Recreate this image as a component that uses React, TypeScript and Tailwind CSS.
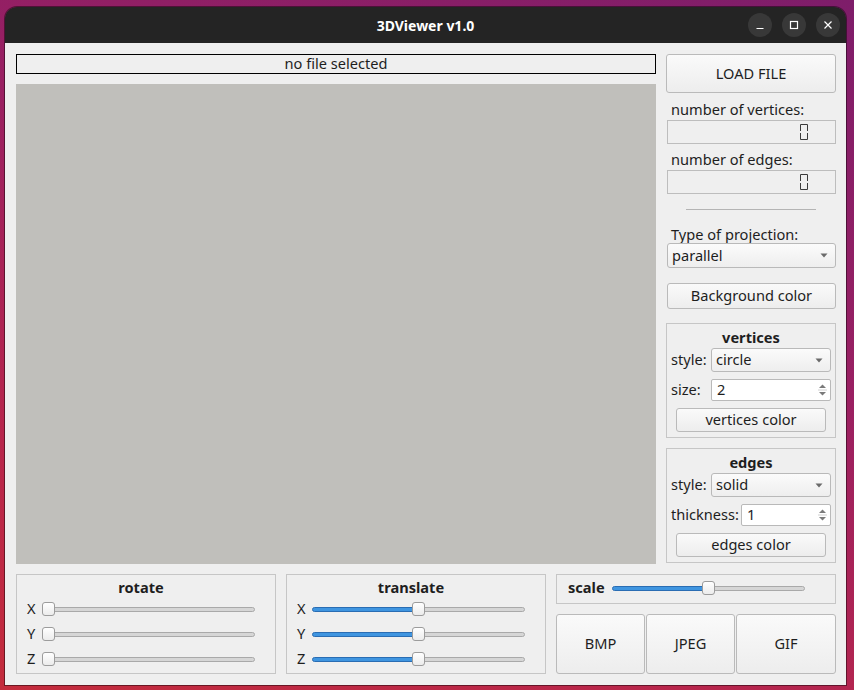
import React from "react";

const font = "font-['Noto_Sans',sans-serif]";

function Slider({ width, value, filled }: { width: number; value: number; filled: boolean }) {
  const handleLeft = Math.round((width - 13) * value);
  return (
    <div className="relative h-[14px]" style={{ width }}>
      <div className="absolute left-[2px] right-0 top-[5px] h-[5px] rounded-full border border-[#a9a9a9] bg-[#d6d6d6]" />
      {filled && (
        <div
          className="absolute left-0 top-[5px] h-[5px] rounded-l-full border border-[#2a6db3] bg-[#3f95e0]"
          style={{ width: handleLeft + 4 }}
        />
      )}
      <div
        className="absolute top-0 h-[14px] w-[13px] rounded-[3px] border border-[#9c9c9c] bg-gradient-to-b from-[#ffffff] to-[#ececec]"
        style={{ left: handleLeft }}
      />
    </div>
  );
}

function Combo({ text, className }: { text: string; className: string }) {
  return (
    <div
      className={`flex items-center justify-between rounded-[3px] border border-[#b9b9b9] bg-gradient-to-b from-[#fbfbfb] to-[#eeeeee] pl-[4px] pr-[7px] text-[14.6px] text-[#1e1e1e] ${className}`}
    >
      <span>{text}</span>
      <svg width="8" height="5" viewBox="0 0 8 5">
        <path d="M0.5 0.5 H7.5 L4 4.5 Z" fill="#6a6a6a" />
      </svg>
    </div>
  );
}

function Spin({ text, className }: { text: string; className: string }) {
  return (
    <div
      className={`flex items-center justify-between rounded-[2px] border border-[#b9b9b9] bg-white pl-[5px] pr-[3px] text-[14.6px] text-[#1e1e1e] ${className}`}
    >
      <span>{text}</span>
      <svg width="9" height="14" viewBox="0 0 9 14">
        <path d="M1 5 H8 L4.5 1.5 Z" fill="#7a7a7a" />
        <path d="M1 9 H8 L4.5 12.5 Z" fill="#7a7a7a" />
        <path d="M0 7 H9" stroke="#d0d0d0" strokeWidth="1" />
      </svg>
    </div>
  );
}

function Button({ children, className }: { children: React.ReactNode; className: string }) {
  return (
    <div
      className={`flex items-center justify-center rounded-[3px] border border-[#bababa] bg-gradient-to-b from-[#fafafa] to-[#ededed] text-[14.6px] text-[#1e1e1e] ${className}`}
    >
      {children}
    </div>
  );
}

function Lcd() {
  return (
    <div className="flex h-[24px] items-center justify-end border border-[#bdbdbd] bg-[#efefef] pr-[26px]">
      <svg width="10" height="18" viewBox="0 0 10 18">
        <path d="M1.5 8 V1.5 H8.5 V8" fill="none" stroke="#3a3a3a" strokeWidth="1" />
        <path d="M1.5 10 V16.5 H8.5 V10" fill="none" stroke="#3a3a3a" strokeWidth="1" />
      </svg>
    </div>
  );
}

function AxisRow({ label, value, filled }: { label: string; value: number; filled: boolean }) {
  return (
    <div className="flex h-[25px] items-center pl-[10px]">
      <span className="w-[15px] text-[14.6px] text-[#1e1e1e]">{label}</span>
      <Slider width={213} value={value} filled={filled} />
    </div>
  );
}

function AxisGroup({ title, value, filled }: { title: string; value: number; filled: boolean }) {
  return (
    <div className="flex h-[100px] w-[260px] flex-col border border-[#c6c6c6] pt-[4px]">
      <div className="h-[17px] pr-[10px] text-center text-[14.6px] font-bold leading-[17px] text-[#1e1e1e]">{title}</div>
      <AxisRow label="X" value={value} filled={filled} />
      <AxisRow label="Y" value={value} filled={filled} />
      <AxisRow label="Z" value={value} filled={filled} />
    </div>
  );
}

export default function App() {
  return (
    <div
      className={`${font} h-[690px] w-[854px] overflow-hidden bg-[linear-gradient(200deg,#7e1d6a_0%,#9a2062_40%,#b8264c_75%,#c42c3c_100%)] pl-[5px] pt-[7px]`}
    >
      <div className="flex h-[678px] w-[841px] flex-col overflow-hidden rounded-t-[12px] shadow-[0_0_0_1px_rgba(0,0,0,0.45)]">
        {/* title bar */}
        <div className="relative flex h-[36px] items-center justify-center bg-[#242424]">
          <span className="text-[14px] font-bold text-white">3DViewer v1.0</span>
          <div className="absolute right-[6px] top-[6px] flex gap-[10px]">
            <div className="flex h-[24px] w-[24px] items-center justify-center rounded-full bg-[#383838]">
              <svg width="10" height="10" viewBox="0 0 10 10">
                <path d="M1.5 8.5 H8.5" stroke="#ffffff" strokeWidth="1.2" />
              </svg>
            </div>
            <div className="flex h-[24px] w-[24px] items-center justify-center rounded-full bg-[#383838]">
              <svg width="10" height="10" viewBox="0 0 10 10">
                <rect x="1.5" y="1.5" width="7" height="7" fill="none" stroke="#ffffff" strokeWidth="1.2" />
              </svg>
            </div>
            <div className="flex h-[24px] w-[24px] items-center justify-center rounded-full bg-[#383838]">
              <svg width="10" height="10" viewBox="0 0 10 10">
                <path d="M1.5 1.5 L8.5 8.5 M8.5 1.5 L1.5 8.5" stroke="#ffffff" strokeWidth="1.2" />
              </svg>
            </div>
          </div>
        </div>

        {/* content */}
        <div className="flex flex-1 flex-col bg-[#efefef] pl-[11px] pt-[11px]">
          <div className="flex gap-[10px]">
            {/* left */}
            <div className="flex w-[640px] flex-col gap-[10px]">
              <div className="flex h-[20px] items-center justify-center border border-black text-[14.6px] text-[#1e1e1e]">
                no file selected
              </div>
              <div className="h-[480px] bg-[#c0bfbb]" />
            </div>

            {/* right */}
            <div className="flex w-[170px] flex-col">
              <Button className="h-[39px]">LOAD FILE</Button>
              <div className="mt-[6px] h-[20px] pl-[5px] text-[14.6px] leading-[20px] text-[#1e1e1e]">number of vertices:</div>
              <div className="mt-[1px] pl-[1px]">
                <Lcd />
              </div>
              <div className="mt-[5px] h-[20px] pl-[5px] text-[14.6px] leading-[20px] text-[#1e1e1e]">number of edges:</div>
              <div className="mt-[1px] pl-[1px]">
                <Lcd />
              </div>
              <div className="mx-[20px] mt-[15px] h-px bg-[#b4b4b4]" />
              <div className="mt-[15px] h-[18px] pl-[5px] text-[14.6px] leading-[18px] text-[#1e1e1e]">Type of projection:</div>
              <div className="pl-[1px]">
                <Combo text="parallel" className="h-[25px]" />
              </div>
              <div className="mt-[15px] pl-[1px]">
                <Button className="h-[26px]">Background color</Button>
              </div>

              {/* vertices group */}
              <div className="mt-[14px] flex h-[115px] flex-col border border-[#c6c6c6] pt-[4px]">
                <div className="h-[18px] text-center text-[14.6px] font-bold leading-[18px] text-[#1e1e1e]">vertices</div>
                <div className="mt-[2px] flex items-center pl-[4px]">
                  <span className="w-[40px] text-[14.6px] text-[#1e1e1e]">style:</span>
                  <Combo text="circle" className="h-[24px] w-[120px]" />
                </div>
                <div className="mt-[7px] flex items-center pl-[4px]">
                  <span className="w-[40px] text-[14.6px] text-[#1e1e1e]">size:</span>
                  <Spin text="2" className="h-[22px] w-[120px]" />
                </div>
                <div className="mt-[7px] px-[9px]">
                  <Button className="h-[24px]">vertices color</Button>
                </div>
              </div>

              {/* edges group */}
              <div className="mt-[10px] flex h-[115px] flex-col border border-[#c6c6c6] pt-[4px]">
                <div className="h-[18px] text-center text-[14.6px] font-bold leading-[18px] text-[#1e1e1e]">edges</div>
                <div className="mt-[2px] flex items-center pl-[4px]">
                  <span className="w-[40px] text-[14.6px] text-[#1e1e1e]">style:</span>
                  <Combo text="solid" className="h-[24px] w-[120px]" />
                </div>
                <div className="mt-[7px] flex items-center pl-[4px]">
                  <span className="w-[70px] text-[14.6px] text-[#1e1e1e]">thickness:</span>
                  <Spin text="1" className="h-[22px] w-[90px]" />
                </div>
                <div className="mt-[7px] px-[9px]">
                  <Button className="h-[24px]">edges color</Button>
                </div>
              </div>
            </div>
          </div>

          {/* bottom row */}
          <div className="mt-[10px] flex gap-[10px]">
            <AxisGroup title="rotate" value={0} filled={false} />
            <AxisGroup title="translate" value={0.5} filled={true} />
            <div className="flex w-[280px] flex-col gap-[10px]">
              <div className="flex h-[30px] items-center border border-[#c6c6c6] pb-[2px] pl-[11px]">
                <span className="w-[44px] text-[14.6px] font-bold text-[#1e1e1e]">scale</span>
                <Slider width={193} value={0.5} filled={true} />
              </div>
              <div className="flex h-[60px] gap-[1px]">
                <Button className="h-[60px] w-[89px]">BMP</Button>
                <Button className="h-[60px] w-[89px]">JPEG</Button>
                <Button className="h-[60px] w-[100px]">GIF</Button>
              </div>
            </div>
          </div>
        </div>
      </div>
    </div>
  );
}
